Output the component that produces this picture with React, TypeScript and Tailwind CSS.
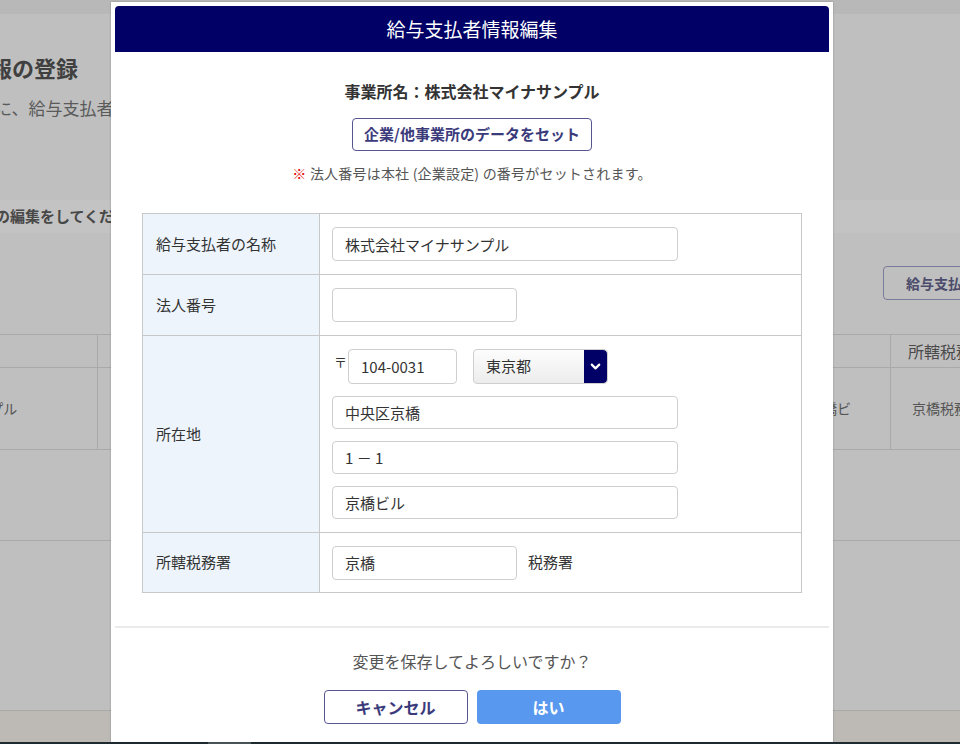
import { ChevronDown } from 'lucide-react';

function Field({ value, w, h = 'h-[34px]' }: { value?: string; w: string; h?: string }) {
    return (
        <input
            readOnly
            defaultValue={value}
            className={`${w} ${h} rounded-[4px] border border-[#cfcfcf] bg-white px-3 text-[15px] text-[#333333] outline-none`}
        />
    );
}

function Row({ label, h, last, children }: { label: string; h: string; last?: boolean; children: React.ReactNode }) {
    return (
        <div className={`flex ${h} ${last ? '' : 'border-b border-[#c8c8c8]'}`}>
            <div className="flex w-[177px] shrink-0 items-center border-r border-[#c8c8c8] bg-[#edf4fc] pl-[13px] text-[15px] text-[#333333]">
                {label}
            </div>
            <div className="flex flex-1 items-center px-[12px]">{children}</div>
        </div>
    );
}

function PageBehind() {
    return (
        <div className="flex h-[742px] flex-col bg-[#bfbfbf]">
            <div className="h-[14px] bg-[#b8b8b8]" />
            <h1 className="mt-[38px] ml-[-142px] whitespace-nowrap text-[22px] leading-[30px] font-bold text-[#404040]">
                給与支払者情報の登録
            </h1>
            <p className="mt-[15px] ml-[-90px] whitespace-nowrap text-[17px] leading-[22px] text-[#5a5a5a]">
                事業所ごとに、給与支払者情報を登録してください。
            </p>
            <div className="mt-[81px] flex h-[33px] items-center bg-[#c3c3c3]">
                <p className="ml-[-110px] whitespace-nowrap text-[15px] font-bold text-[#484848]">
                    給与支払者情報の編集をしてください。
                </p>
            </div>
            <div className="mt-[33px] flex pl-[883px]">
                <div className="flex h-[34px] items-center whitespace-nowrap rounded-[4px] border border-[#7a7a9a] px-[22px] text-[14px] font-bold text-[#4b4b6b]">
                    給与支払者を追加
                </div>
            </div>
            <div className="mt-[34px] border-y border-[#a9a9a9]">
                <div className="flex h-[33px] border-b border-[#a9a9a9]">
                    <div className="w-[98px] shrink-0 border-r border-[#a9a9a9]" />
                    <div className="w-[793px] shrink-0 border-r border-[#a9a9a9]" />
                    <div className="flex flex-1 items-center whitespace-nowrap pl-[17px] text-[16px] text-[#4a4a4a]">所轄税務署</div>
                </div>
                <div className="flex h-[81px]">
                    <div className="flex w-[98px] shrink-0 items-center overflow-hidden border-r border-[#a9a9a9]">
                        <span className="ml-[-136px] whitespace-nowrap text-[14px] text-[#555555]">株式会社マイナサンプル</span>
                    </div>
                    <div className="flex w-[793px] shrink-0 items-center justify-end border-r border-[#a9a9a9] pr-[39px] text-[14px] text-[#555555]">
                        中央区京橋1－1京橋ビ
                    </div>
                    <div className="flex flex-1 items-center whitespace-nowrap pl-[21px] text-[14px] text-[#555555]">京橋税務署</div>
                </div>
            </div>
            <div className="mt-[90px] border-b border-[#a9a9a9]" />
            <div className="mt-[169px] flex-1 border-t border-[#a9a9a9] bg-[#bdb9b5]" />
        </div>
    );
}

function EditModal() {
    return (
        <div className="absolute left-[111px] top-[2px] bottom-[2px] w-[722px] bg-white px-[4px] pt-[4px] shadow-[0_0_2px_rgba(0,0,0,0.25)]">
            <div className="flex h-[46px] items-center justify-center rounded-t-[4px] bg-[#000066] text-[19px] text-white">
                給与支払者情報編集
            </div>

            <p className="mt-[27px] text-center text-[16px] leading-[24px] font-bold text-[#333333]">
                事業所名：株式会社マイナサンプル
            </p>
            <div className="mt-[15px] flex justify-center">
                <button className="h-[33px] w-[240px] rounded-[4px] border border-[#55558f] bg-white text-[15px] font-bold text-[#3b3b7b]">
                    企業/他事業所のデータをセット
                </button>
            </div>
            <p className="mt-[12px] text-center text-[14px] leading-[20px] tracking-[0.2px] text-[#555555]">
                <span className="text-[#e60000]">※</span> 法人番号は本社 (企業設定) の番号がセットされます。
            </p>

            <div className="mx-[27px] mt-[30px] border border-[#c8c8c8]">
                <Row label="給与支払者の名称" h="h-[61px]">
                    <Field value="株式会社マイナサンプル" w="w-[346px]" />
                </Row>
                <Row label="法人番号" h="h-[61px]">
                    <Field w="w-[185px]" />
                </Row>
                <Row label="所在地" h="h-[197px]">
                    <div className="flex flex-col gap-[12px]">
                        <div className="flex items-center">
                            <span className="mt-[-9px] w-[16px] pl-[2px] text-[13px] text-[#333333]">〒</span>
                            <Field value="104-0031" w="w-[109px]" h="h-[35px]" />
                            <div className="ml-[16px] flex h-[35px] w-[135px] overflow-hidden rounded-[4px] border border-[#cfcfcf] bg-gradient-to-b from-[#fdfdfd] to-[#ececec]">
                                <span className="flex flex-1 items-center pl-3 text-[15px] text-[#333333]">東京都</span>
                                <span className="flex w-[23px] items-center justify-center rounded-r-[4px] bg-[#000066]">
                                    <ChevronDown size={15} strokeWidth={3.5} color="#ffffff" />
                                </span>
                            </div>
                        </div>
                        <Field value="中央区京橋" w="w-[346px]" h="h-[33px]" />
                        <Field value="1 － 1" w="w-[346px]" h="h-[33px]" />
                        <Field value="京橋ビル" w="w-[346px]" h="h-[33px]" />
                    </div>
                </Row>
                <Row label="所轄税務署" h="h-[59px]" last>
                    <Field value="京橋" w="w-[185px]" />
                    <span className="ml-[11px] text-[15px] text-[#333333]">税務署</span>
                </Row>
            </div>

            <div className="mt-[33px] h-[2px] bg-[#ebebeb]" />

            <p className="mt-[21px] text-center text-[16px] leading-[24px] text-[#555555]">変更を保存してよろしいですか？</p>
            <div className="mt-[17px] flex justify-center gap-[9px]">
                <button className="h-[34px] w-[144px] rounded-[4px] border border-[#55558f] bg-white text-[16px] font-bold text-[#3b3b7b]">
                    キャンセル
                </button>
                <button className="h-[34px] w-[144px] rounded-[4px] bg-[#5898ee] text-[16px] font-bold text-white">
                    はい
                </button>
            </div>
        </div>
    );
}

export default function App() {
    return (
        <div className="relative h-[744px] w-[960px] overflow-hidden font-['Noto_Sans_CJK_JP','Noto_Sans',sans-serif]">
            <PageBehind />
            <div className="flex h-[2px]">
                <div className="w-[208px] bg-[#1e2b31]" />
                <div className="w-[43px] bg-[#4a565c]" />
                <div className="flex-1 bg-[#1e2b31]" />
            </div>
            <EditModal />
        </div>
    );
}
